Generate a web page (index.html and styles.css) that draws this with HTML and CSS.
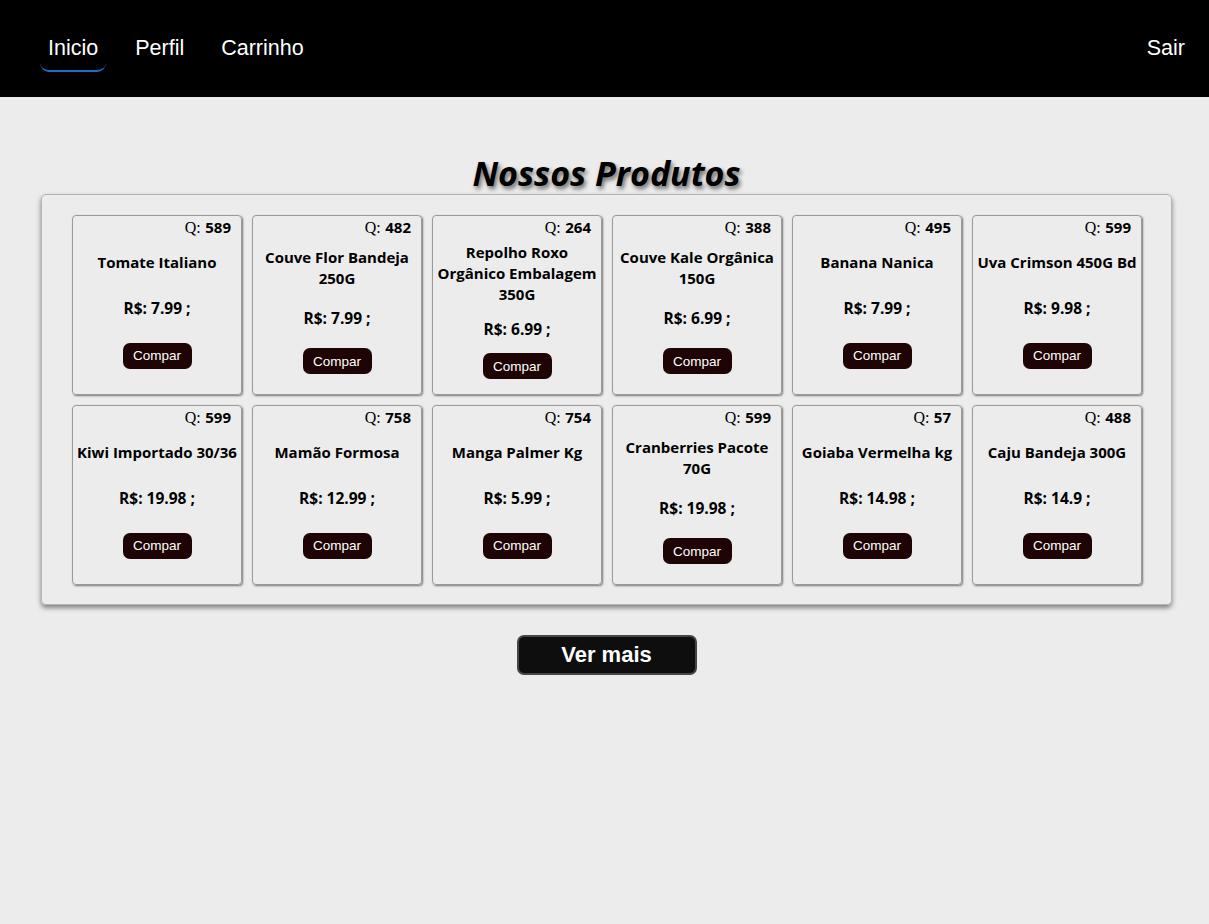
FILE: index.html
```html
<!DOCTYPE html>
<html lang="pt-BR">
<head>
<meta charset="utf-8">
<title>Nossos Produtos</title>
<link rel="stylesheet" href="styles.css">
</head>
<body>
<header class="nav">
  <nav class="nav-links">
    <a class="nav-link active" href="#">Inicio</a>
    <a class="nav-link" href="#">Perfil</a>
    <a class="nav-link" href="#">Carrinho</a>
  </nav>
  <a class="nav-link" href="#">Sair</a>
</header>
<main class="main">
  <h1 class="title">Nossos Produtos</h1>
  <section class="panel">
    <div class="card"><div class="qty"><span class="q">Q:</span> <b>589</b></div><div class="body"><h3 class="name">Tomate Italiano</h3><p class="price">R$: 7.99 ;</p><button class="buy">Compar</button></div></div>
    <div class="card"><div class="qty"><span class="q">Q:</span> <b>482</b></div><div class="body"><h3 class="name">Couve Flor Bandeja 250G</h3><p class="price">R$: 7.99 ;</p><button class="buy">Compar</button></div></div>
    <div class="card"><div class="qty"><span class="q">Q:</span> <b>264</b></div><div class="body"><h3 class="name">Repolho Roxo Orgânico Embalagem 350G</h3><p class="price">R$: 6.99 ;</p><button class="buy">Compar</button></div></div>
    <div class="card"><div class="qty"><span class="q">Q:</span> <b>388</b></div><div class="body"><h3 class="name">Couve Kale Orgânica 150G</h3><p class="price">R$: 6.99 ;</p><button class="buy">Compar</button></div></div>
    <div class="card"><div class="qty"><span class="q">Q:</span> <b>495</b></div><div class="body"><h3 class="name">Banana Nanica</h3><p class="price">R$: 7.99 ;</p><button class="buy">Compar</button></div></div>
    <div class="card"><div class="qty"><span class="q">Q:</span> <b>599</b></div><div class="body"><h3 class="name">Uva Crimson 450G Bd</h3><p class="price">R$: 9.98 ;</p><button class="buy">Compar</button></div></div>
    <div class="card"><div class="qty"><span class="q">Q:</span> <b>599</b></div><div class="body"><h3 class="name">Kiwi Importado 30/36</h3><p class="price">R$: 19.98 ;</p><button class="buy">Compar</button></div></div>
    <div class="card"><div class="qty"><span class="q">Q:</span> <b>758</b></div><div class="body"><h3 class="name">Mamão Formosa</h3><p class="price">R$: 12.99 ;</p><button class="buy">Compar</button></div></div>
    <div class="card"><div class="qty"><span class="q">Q:</span> <b>754</b></div><div class="body"><h3 class="name">Manga Palmer Kg</h3><p class="price">R$: 5.99 ;</p><button class="buy">Compar</button></div></div>
    <div class="card"><div class="qty"><span class="q">Q:</span> <b>599</b></div><div class="body"><h3 class="name">Cranberries Pacote 70G</h3><p class="price">R$: 19.98 ;</p><button class="buy">Compar</button></div></div>
    <div class="card"><div class="qty"><span class="q">Q:</span> <b>57</b></div><div class="body"><h3 class="name">Goiaba Vermelha kg</h3><p class="price">R$: 14.98 ;</p><button class="buy">Compar</button></div></div>
    <div class="card"><div class="qty"><span class="q">Q:</span> <b>488</b></div><div class="body"><h3 class="name">Caju Bandeja 300G</h3><p class="price">R$: 14.9 ;</p><button class="buy">Compar</button></div></div>
  </section>
  <div class="more-wrap"><button class="more">Ver mais</button></div>
</main>
</body>
</html>
```
FILE: styles.css
```css
* { box-sizing: border-box; }
html, body { margin: 0; padding: 0; }
body {
  background: #ececec;
  font-family: "Liberation Sans", Arial, sans-serif;
  min-height: 924px;
}
.nav {
  height: 97px;
  background: #000;
  display: flex;
  align-items: center;
  justify-content: space-between;
  padding: 0 16px 0 40px;
}
.nav-links { display: flex; gap: 21px; }
.nav-link {
  color: #fff;
  text-decoration: none;
  font-size: 21.5px;
  line-height: 24px;
  padding: 7px 8px 10px;
  border-bottom: 2px solid transparent;
  border-radius: 9px;
  margin-top: 4px;
}
.nav-link.active { border-bottom-color: #1c6fc9; }
.main { padding: 0 37px 0 41px; }
.title {
  margin: 56px 0 0;
  text-align: center;
  font-family: "Open Sans", "Noto Sans", sans-serif;
  font-style: italic;
  font-weight: 700;
  font-size: 34px;
  line-height: 41px;
  color: #000;
  text-shadow: 2px 3px 4px rgba(0,0,0,0.55);
}
.panel {
  border: 1px solid #b4b4b4;
  border-radius: 5px;
  box-shadow: 0 3px 5px rgba(0,0,0,0.45);
  padding: 20px 29px 19px 30px;
  display: grid;
  grid-template-columns: repeat(6, 170px);
  gap: 10px;
}
.card {
  position: relative;
  height: 180px;
  border: 1px solid #9a9a9a;
  border-radius: 4px;
  box-shadow: 1px 1px 2px rgba(0,0,0,0.5);
  display: flex;
  flex-direction: column;
  padding: 12px 0 1px;
}
.qty {
  position: absolute;
  top: 1px;
  right: 10px;
  line-height: 21px;
  font-size: 16px;
  color: #000;
}
.q { font-family: "Liberation Serif", "Times New Roman", serif; }
.qty b { font-family: "Open Sans", "Noto Sans", sans-serif; font-weight: 700; font-size: 15px; }
.body {
  flex: 1;
  display: flex;
  flex-direction: column;
  align-items: center;
  justify-content: space-evenly;
}
.name {
  margin: 0;
  font-family: "Open Sans", "Noto Sans", sans-serif;
  font-weight: 700;
  font-size: 15px;
  line-height: 21px;
  text-align: center;
}
.price {
  margin: 0;
  font-family: "Open Sans", "Noto Sans", sans-serif;
  font-weight: 700;
  font-size: 15.5px;
  line-height: 21px;
}
.buy {
  height: 26px;
  width: 69px;
  border: none;
  border-radius: 7px;
  background: #1e0404;
  color: #fff;
  font-family: "Liberation Sans", Arial, sans-serif;
  font-size: 13.5px;
  padding: 0;
}
.more-wrap { display: flex; justify-content: center; padding-top: 30px; }
.more {
  width: 180px;
  height: 40px;
  background: #0e0e0e;
  border: 2px solid #454545;
  border-radius: 7px;
  color: #fff;
  font-family: "Liberation Sans", Arial, sans-serif;
  font-weight: 700;
  font-size: 22px;
  padding: 0;
}
```
